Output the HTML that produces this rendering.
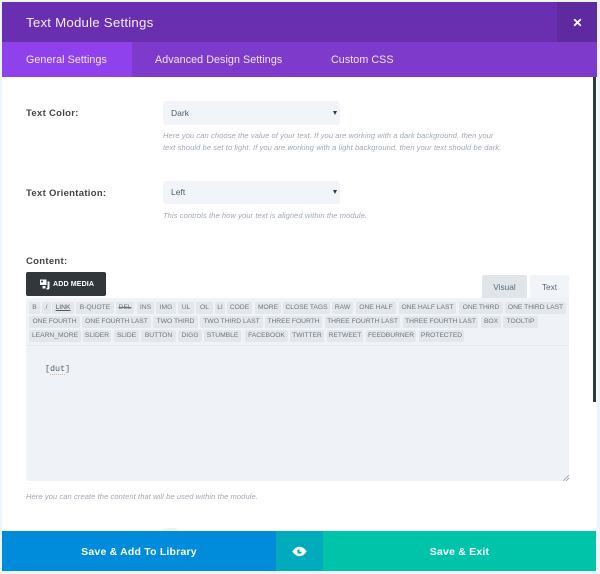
<!DOCTYPE html>
<html>
<head>
<meta charset="utf-8">
<style>
html,body{margin:0;padding:0}
body{width:600px;height:574px;overflow:hidden;background:#eaf6fc;position:relative;font-family:"Liberation Sans",sans-serif}
div,span{position:absolute;box-sizing:border-box}
.t{white-space:nowrap}
.tab{top:42px;height:35px;line-height:36px;color:#eee6f8;font-size:10.7px;white-space:nowrap;letter-spacing:.08px}
.lab{left:26px;font-size:9.5px;font-weight:bold;color:#444;white-space:nowrap;letter-spacing:.3px}
.sel{left:163px;width:177px;background:#f1f5f9;border-radius:3px;font-size:8.5px;color:#4f5b66;padding-left:8px;white-space:nowrap}
.arr{left:333px;width:0;height:0;border-left:2.2px solid transparent;border-right:2.2px solid transparent;border-top:4px solid #32373c}
.d{font-size:7.5px;font-style:italic;color:#9fa8b2;white-space:nowrap;letter-spacing:.1px}
.b{height:12px;line-height:12px;background:#e3e7eb;border-radius:2px;font-size:6.7px;color:#6b7680;text-align:center;white-space:nowrap;overflow:hidden}
</style>
</head>
<body>
<div style="left:2px;top:2px;width:595px;height:569px;background:#fff"></div>
<div style="left:2px;top:2px;width:595px;height:40px;background:#6a2eb0"></div>
<div style="left:557px;top:2px;width:40px;height:40px;background:#5f2aa0"></div>
<div class="t" style="left:26px;top:2px;height:40px;line-height:42px;color:#f3edfa;font-size:13.3px;letter-spacing:.2px">Text Module Settings</div>
<svg style="position:absolute;left:573px;top:18px" width="9" height="9" viewBox="0 0 9 9"><path d="M1.2 1.2L7.8 7.8M7.8 1.2L1.2 7.8" stroke="#fff" stroke-width="1.8" fill="none"/></svg>
<div style="left:2px;top:42px;width:595px;height:35px;background:#7e3bcb"></div>
<div style="left:2px;top:42px;width:130px;height:35px;background:#8f42ec"></div>
<div class="tab" style="left:26px">General Settings</div>
<div class="tab" style="left:155px">Advanced Design Settings</div>
<div class="tab" style="left:331px">Custom CSS</div>
<div style="left:593px;top:77px;width:3px;height:325px;background:#32373c"></div>

<div class="lab" style="top:108px">Text Color:</div>
<div class="sel" style="top:101px;height:24px;line-height:24px">Dark</div>
<div class="arr" style="top:111px"></div>
<div class="d" style="left:163px;top:131px">Here you can choose the value of your text. If you are working with a dark background, then your</div>
<div class="d" style="left:163px;top:143px">text should be set to light. If you are working with a light background, then your text should be dark.</div>

<div class="lab" style="top:188px">Text Orientation:</div>
<div class="sel" style="top:181px;height:23px;line-height:23px">Left</div>
<div class="arr" style="top:190px"></div>
<div class="d" style="left:163px;top:211px">This controls the how your text is aligned within the module.</div>

<div class="lab" style="top:256px">Content:</div>
<div style="left:26px;top:272px;width:80px;height:24px;background:#32373c;border-radius:2px"></div>
<svg style="position:absolute;left:39px;top:278px" width="12" height="12" viewBox="0 0 12 12"><path d="M1 1.5h6.5v5.5H1zM8.5 3.5h2v6.5q0 1.5-2 1.5h-1v-1.2q1 0 1-.8zM3.5 8h3v2.5h-3z" fill="#fff"/><circle cx="3" cy="3.5" r="1" fill="#32373c"/></svg>
<div class="t" style="left:53px;top:272px;height:24px;line-height:24px;color:#fff;font-size:7.1px;font-weight:bold;letter-spacing:.1px">ADD MEDIA</div>

<div style="left:482px;top:275px;width:45px;height:24px;background:#e0e5e9;border-radius:2px 2px 0 0;text-align:center;line-height:25px;font-size:8.3px;color:#5f6a74">Visual</div>
<div style="left:530px;top:275px;width:39px;height:24px;background:#f1f5f9;border-radius:2px 2px 0 0;text-align:center;line-height:25px;font-size:8.3px;color:#5f6a74">Text</div>

<div style="left:26px;top:298px;width:543px;height:183px;background:#eff3f8;border-radius:0 0 3px 3px"></div>
<div style="left:26px;top:345px;width:543px;height:1px;background:#e6eaee"></div>

<div class="b" style="left:29px;top:302px;width:11px">B</div>
<div class="b" style="left:42px;top:302px;width:9px">/</div>
<div class="b" style="left:52px;top:302px;width:22px;text-decoration:underline;color:#4f5b66">LINK</div>
<div class="b" style="left:76px;top:302px;width:38px">B-QUOTE</div>
<div class="b" style="left:116px;top:302px;width:18px;text-decoration:line-through">DEL</div>
<div class="b" style="left:137px;top:302px;width:17px">INS</div>
<div class="b" style="left:156px;top:302px;width:20px">IMG</div>
<div class="b" style="left:178px;top:302px;width:16px">UL</div>
<div class="b" style="left:196px;top:302px;width:17px">OL</div>
<div class="b" style="left:215px;top:302px;width:10px">LI</div>
<div class="b" style="left:227px;top:302px;width:25px">CODE</div>
<div class="b" style="left:255px;top:302px;width:26px">MORE</div>
<div class="b" style="left:283px;top:302px;width:47px">CLOSE TAGS</div>
<div class="b" style="left:332px;top:302px;width:21px">RAW</div>
<div class="b" style="left:356px;top:302px;width:40px">ONE HALF</div>
<div class="b" style="left:399px;top:302px;width:57px">ONE HALF LAST</div>
<div class="b" style="left:459px;top:302px;width:44px">ONE THIRD</div>
<div class="b" style="left:505px;top:302px;width:61px">ONE THIRD LAST</div>

<div class="b" style="left:29px;top:316px;width:51px">ONE FOURTH</div>
<div class="b" style="left:82px;top:316px;width:69px">ONE FOURTH LAST</div>
<div class="b" style="left:153px;top:316px;width:45px">TWO THIRD</div>
<div class="b" style="left:200px;top:316px;width:63px">TWO THIRD LAST</div>
<div class="b" style="left:265px;top:316px;width:57px">THREE FOURTH</div>
<div class="b" style="left:325px;top:316px;width:75px">THREE FOURTH LAST</div>
<div class="b" style="left:403px;top:316px;width:75px">THREE FOURTH LAST</div>
<div class="b" style="left:481px;top:316px;width:20px">BOX</div>
<div class="b" style="left:503px;top:316px;width:35px">TOOLTIP</div>

<div class="b" style="left:29px;top:330px;width:52px">LEARN_MORE</div>
<div class="b" style="left:83px;top:330px;width:28px">SLIDER</div>
<div class="b" style="left:114px;top:330px;width:25px">SLIDE</div>
<div class="b" style="left:141px;top:330px;width:35px">BUTTON</div>
<div class="b" style="left:178px;top:330px;width:24px">DIGG</div>
<div class="b" style="left:204px;top:330px;width:37px">STUMBLE</div>
<div class="b" style="left:245px;top:330px;width:43px">FACEBOOK</div>
<div class="b" style="left:290px;top:330px;width:34px">TWITTER</div>
<div class="b" style="left:327px;top:330px;width:36px">RETWEET</div>
<div class="b" style="left:366px;top:330px;width:50px">FEEDBURNER</div>
<div class="b" style="left:419px;top:330px;width:45px">PROTECTED</div>

<div class="t" style="left:45px;top:364px;font-family:'Liberation Mono',monospace;font-size:8.4px;color:#4f5b66">[<span style="position:static;border-bottom:1px dotted #d9b8a6">dut</span>]</div>
<svg style="position:absolute;left:563px;top:475px" width="6" height="6" viewBox="0 0 6 6"><path d="M0 6L6 0M3 6L6 3" stroke="#9aa2aa" stroke-width=".8" fill="none"/></svg>

<div class="d" style="left:26px;top:492px">Here you can create the content that will be used within the module.</div>
<div style="left:163px;top:528px;width:14px;height:4px;background:#eff3f8;border-radius:2px 2px 0 0"></div>

<div style="left:2px;top:531px;width:274px;height:40px;background:#008bdb;color:#fff;font-weight:bold;font-size:10.5px;text-align:center;line-height:42px;letter-spacing:.2px">Save &amp; Add To Library</div>
<div style="left:276px;top:531px;width:47px;height:40px;background:#00abbb"></div>
<svg style="position:absolute;left:292px;top:546px" width="15" height="11" viewBox="0 0 15 11"><path d="M.3 5.5Q3.5 .8 7.5 .8T14.7 5.5Q11.5 10.2 7.5 10.2T.3 5.5Z" fill="#fff"/><path d="M7.5 3.2A2.3 2.3 0 1 0 9.8 5.8H7.5Z" fill="#00abbb"/></svg>
<div style="left:323px;top:531px;width:273px;height:40px;background:#00c4aa;color:#fff;font-weight:bold;font-size:10.5px;text-align:center;line-height:42px;letter-spacing:.2px">Save &amp; Exit</div>
</body>
</html>
